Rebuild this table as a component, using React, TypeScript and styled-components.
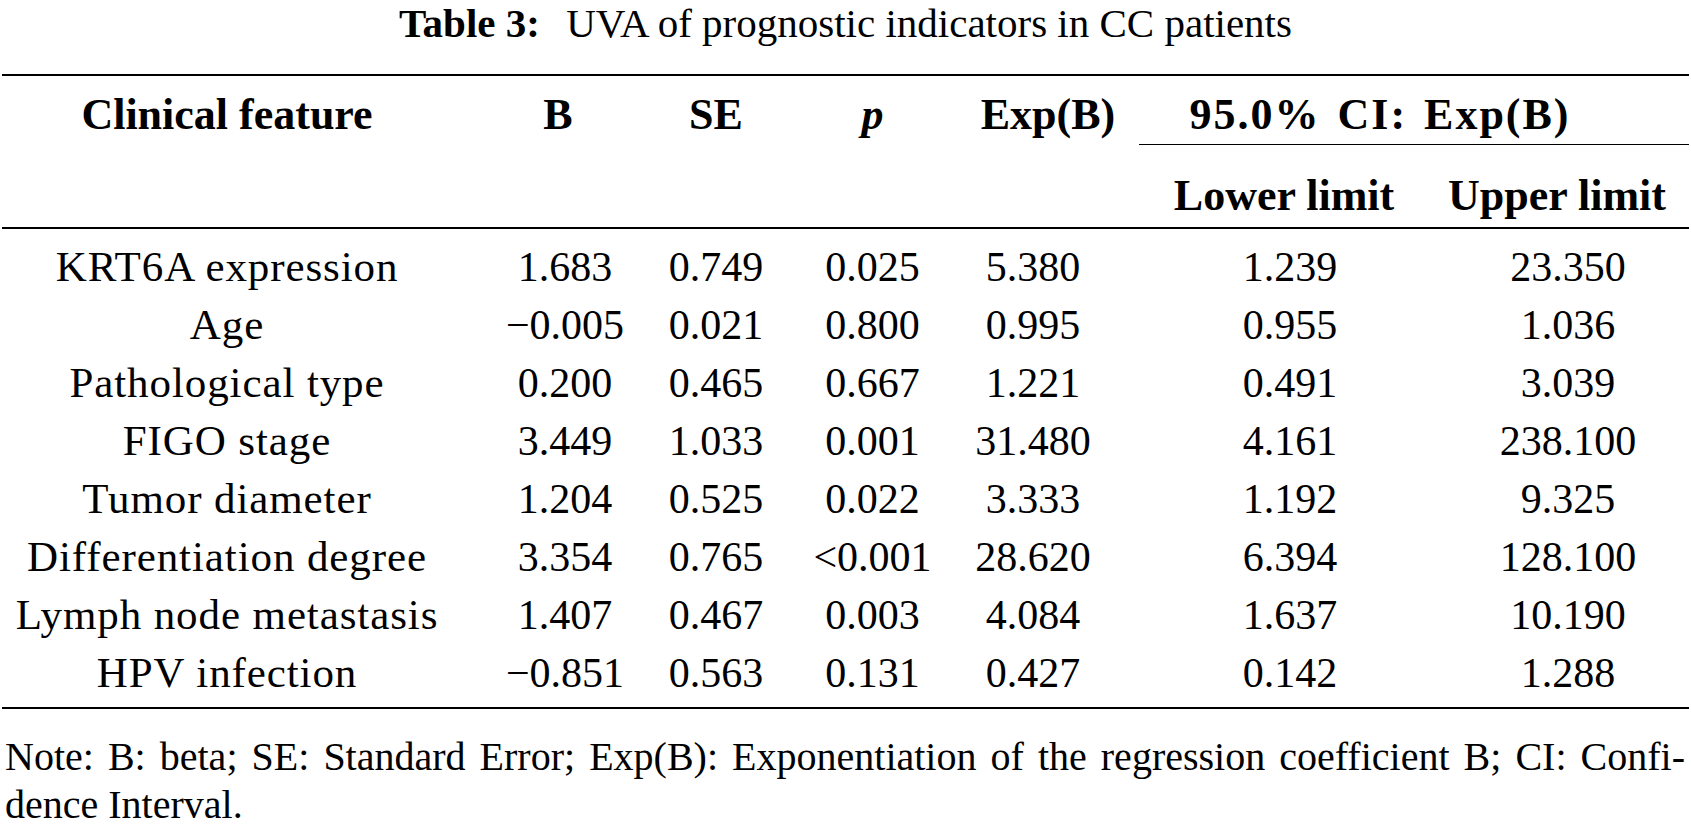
import styled, { createGlobalStyle } from 'styled-components';

type Row = {
  feature: string;
  values: string[];
};

// 각 열의 폭 (표 전체 1687px)
const COL_WIDTHS = [450, 187, 154, 159, 187, 286, 264];

// 숫자 열 안쪽 여백: [left, right]
const VALUE_PAD: [number, number][] = [
  [39, 0],
  [0, 0],
  [0, 0],
  [0, 25],
  [16, 0],
  [22, 0],
];

const ROWS: Row[] = [
  { feature: 'KRT6A expression', values: ['1.683', '0.749', '0.025', '5.380', '1.239', '23.350'] },
  { feature: 'Age', values: ['\u22120.005', '0.021', '0.800', '0.995', '0.955', '1.036'] },
  { feature: 'Pathological type', values: ['0.200', '0.465', '0.667', '1.221', '0.491', '3.039'] },
  { feature: 'FIGO stage', values: ['3.449', '1.033', '0.001', '31.480', '4.161', '238.100'] },
  { feature: 'Tumor diameter', values: ['1.204', '0.525', '0.022', '3.333', '1.192', '9.325'] },
  { feature: 'Differentiation degree', values: ['3.354', '0.765', '<0.001', '28.620', '6.394', '128.100'] },
  { feature: 'Lymph node metastasis', values: ['1.407', '0.467', '0.003', '4.084', '1.637', '10.190'] },
  { feature: 'HPV infection', values: ['\u22120.851', '0.563', '0.131', '0.427', '0.142', '1.288'] },
];

const App = () => {
  return (
    <Page>
      <GlobalStyle />
      <Caption>
        <CaptionLabel>Table 3:</CaptionLabel> UVA of prognostic indicators in CC patients
      </Caption>
      <Table>
        <colgroup>
          {COL_WIDTHS.map((w, i) => (
            <col key={i} style={{ width: w }} />
          ))}
        </colgroup>
        <thead>
          <tr>
            <HeadCell rowSpan={2} $rule={2}>
              Clinical feature
            </HeadCell>
            <HeadCell rowSpan={2} $rule={2} $pl={25}>
              B
            </HeadCell>
            <HeadCell rowSpan={2} $rule={2}>
              SE
            </HeadCell>
            <HeadCell rowSpan={2} $rule={2}>
              <em>p</em>
            </HeadCell>
            <HeadCell rowSpan={2} $rule={2} $pl={5}>
              Exp(B)
            </HeadCell>
            <HeadCell colSpan={2} $rule={1} $pr={68} $wide>
              95.0% CI: Exp(B)
            </HeadCell>
          </tr>
          <tr>
            <HeadCell $rule={2} $pl={4} $sub>
              Lower limit
            </HeadCell>
            <HeadCell $rule={2} $sub>
              Upper limit
            </HeadCell>
          </tr>
        </thead>
        <tbody>
          {ROWS.map(row => (
            <BodyRow key={row.feature}>
              <Cell $label>{row.feature}</Cell>
              {row.values.map((v, i) => (
                <Cell key={i} $pl={VALUE_PAD[i][0]} $pr={VALUE_PAD[i][1]}>
                  {v}
                </Cell>
              ))}
            </BodyRow>
          ))}
        </tbody>
      </Table>
      <Note>
        <NoteLine $justify>
          Note: B: beta; SE: Standard Error; Exp(B): Exponentiation of the regression coefficient B; CI: Confi-
        </NoteLine>
        <NoteLine>dence Interval.</NoteLine>
      </Note>
    </Page>
  );
};

const GlobalStyle = createGlobalStyle`
  html, body {
    margin: 0;
    padding: 0;
    background: #ffffff;
  }
  body {
    color: #000000;
    font-family: 'Liberation Serif', 'Times New Roman', serif;
  }
`;

const Page = styled.div`
  width: 1691px;
  display: flex;
  flex-direction: column;
`;

const Caption = styled.div`
  text-align: center;
  font-size: 41px;
  line-height: 46px;
  margin-bottom: 28px;
  white-space: nowrap;
`;

const CaptionLabel = styled.b`
  font-weight: bold;
  margin-right: 16px;
`;

const Table = styled.table`
  width: 1687px;
  margin: 0 2px;
  table-layout: fixed;
  border-collapse: separate;
  border-spacing: 0;
  border-top: 2px solid #000;
  border-bottom: 2px solid #000;
`;

const HeadCell = styled.th<{ $rule?: number; $pl?: number; $pr?: number; $sub?: boolean; $wide?: boolean }>`
  font-size: 44px;
  font-weight: bold;
  line-height: 59px;
  text-align: center;
  vertical-align: top;
  white-space: nowrap;
  padding: ${p => (p.$sub ? '21px' : '9px')} ${p => p.$pr ?? 0}px ${p => (p.$sub ? '2px' : '0')}
    ${p => p.$pl ?? 0}px;
  border-bottom: ${p => p.$rule ?? 0}px solid #000;
  letter-spacing: ${p => (p.$wide ? '2px' : '0')};
  word-spacing: ${p => (p.$wide ? '4px' : '0')};

  em {
    font-style: italic;
  }
`;

const BodyRow = styled.tr`
  &:first-child td {
    padding-top: 9px;
  }
  &:last-child td {
    padding-bottom: 5px;
  }
`;

const Cell = styled.td<{ $label?: boolean; $pl?: number; $pr?: number }>`
  font-size: ${p => (p.$label ? '43px' : '42px')};
  letter-spacing: ${p => (p.$label ? '0.9px' : '0')};
  line-height: 58px;
  text-align: center;
  vertical-align: top;
  white-space: nowrap;
  padding: 0 ${p => p.$pr ?? 0}px 0 ${p => p.$pl ?? 0}px;
`;

const Note = styled.div`
  margin: 24px 6px 0 5px;
  font-size: 40px;
  line-height: 48px;
`;

const NoteLine = styled.div<{ $justify?: boolean }>`
  white-space: nowrap;
  text-align: ${p => (p.$justify ? 'justify' : 'left')};
  text-align-last: ${p => (p.$justify ? 'justify' : 'left')};
`;

export default App;
